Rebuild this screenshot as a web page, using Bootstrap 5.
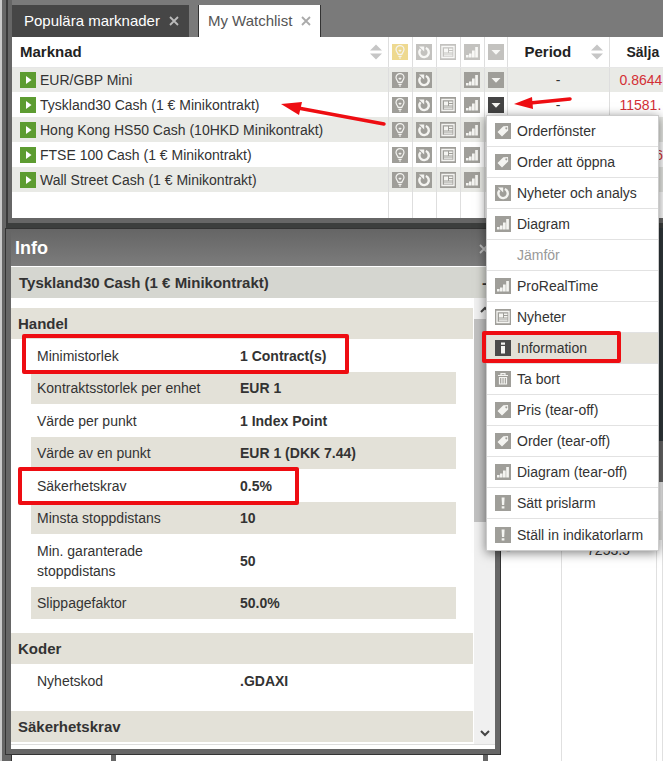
<!DOCTYPE html>
<html lang="sv">
<head>
<meta charset="utf-8">
<meta name="viewport" content="width=device-width, initial-scale=1">
<title>My Watchlist</title>
<link href="https://cdn.jsdelivr.net/npm/bootstrap@5.3.0/dist/css/bootstrap.min.css" rel="stylesheet">
<style>
body{font-family:"Liberation Sans",Arial,sans-serif;font-size:14px;line-height:20px;color:#333;background:#fff}
button{font:inherit;color:inherit}
.desk{min-height:100vh;overflow:hidden;background:#fff}
.ico{width:16px;height:16px;flex:none;display:block;background:#9f9e99;color:#f4f4f1}
.pale{opacity:.62}
.gold{background:#eed990}
.dark{background:#444}
.bare{border:0;background:none;padding:0;display:block}
/* windows at the back */
.left-strip{left:0;top:0;bottom:0;width:12px;background:#666;border-left:2px solid #c9c9c9;border-right:1px solid #333}
.back-win{left:12px;right:0;top:222px;bottom:0;background:#fff}
.chart-area{height:219px;background:#30373b}
.chart-foot{height:41px;background:#666}
.back-list{left:99px;top:531px;bottom:0;width:377px;background:#fff;border:solid #666;border-width:0 5px}
.back-grid{margin-left:494px;width:calc(100% - 494px);table-layout:fixed}
.back-grid td{padding:0;height:29px;border-right:1px solid #e0e0e0;text-align:center}
.back-grid tr:first-child td{background:#f0f0f0}
.back-grid tr:nth-child(2) td{background:#e4e4e2}
.back-grid td:first-child{text-align:left}
.back-grid .rest td{height:221px}
/* watchlist */
.watch{left:6px;right:0;top:0;background:#666;border-left:2px solid #3a3a3a;border-bottom:5px solid #3c3e3d;padding:0 0 5px 4px}
.tabs{height:37px;background:#7a7a7a;padding-top:5px;gap:9px}
.tab-item{height:32px;font-size:15px;padding:0 10px 0 12px;background:#464646;color:#fff;gap:9px}
.tab-item.current{background:#fff;color:#555;border:solid #333;border-width:0 1px;padding:0 9px}
.watch-body{background:#fff;height:181px}
.market{table-layout:fixed;width:100%;height:100%}
.market th,.market td{padding:0;border-right:1px solid #dedede;white-space:nowrap;overflow:hidden;height:25px}
.market th:last-child,.market td:last-child{border-right:0}
.market th{height:30px;font-size:15px;color:#222;border-bottom:1px solid #e6e6e6}
.market th.sell{font-size:14px;padding-left:17px}
.market td.price{color:#d32f35;padding-left:10px}
.market tr.odd td{background:#e9eae6}
.market .tail td{height:26px}
.market td>.ico,.market th>.ico,.market td>button{margin:auto}
.name-head{padding:0 6px 0 8px}
.period-head{padding:0 6px 0 17px}
.go{background:#5d9c31;color:#fff}
/* info */
.info{left:5px;top:228px;width:496px;background:#666;border:1px solid #333;padding:0 5px 5px}
.info-head{height:37px;background:linear-gradient(#656565,#7c7c7c);padding:2px 6px 0 4px;color:#fff}
.info-head h2{font-size:18px}
.info-title{height:32px;background:#d5d6d0;border-top:1px solid #fff;font-size:15px;padding:0 8px}
.info-body{background:#fff;padding-bottom:4px}
.info-scroll{border-bottom:1px solid #ddd;height:447px}
.sect{height:31px;font-size:15px;background:#e3e1d8;padding:0 7px;margin:0}
.sect:first-child{margin-top:10px}
.facts{margin:0 17px 14px 20px;width:calc(100% - 37px)}
.facts th,.facts td{padding:0 6px;height:33px}
.facts th{font-weight:400;width:203px}
.facts td{font-weight:700}
.facts tr:nth-child(even)>*{background:#e3e1d8;height:32px}
.facts .tall>*{height:53px}
.scrollrail{width:21px;background:#f0f0f0;margin-left:1px}
.scrollrail .thumb{height:203px;background:#c1c1c1}
.scrollrail button{height:21px;width:100%;color:#444}
/* menu */
.ctx{left:486px;top:115px;width:173px;background:#fff;border:1px solid #ccc;box-shadow:0 2px 10px rgba(0,0,0,.5)}
.ctx button{height:31px;padding:0 8px;gap:6px;border:0;border-bottom:1px solid #e2e2e2;background:#fff;width:100%;text-align:left;white-space:nowrap}
.ctx button:last-child{border-bottom:0}
.ctx button.hot{background:#e3e1d8}
.ctx button.hot .ico{background:#4a4a4a}
.ctx button:disabled{color:#999;padding-left:30px}
/* red annotations */
.ring{border:4px solid #ee0d12;border-radius:2px;pointer-events:none}
.ring-a{left:22px;top:334px;width:327px;height:40px}
.ring-b{left:18px;top:467px;width:281px;height:38px}
.ring-c{left:482px;top:331px;width:139px;height:32px}
.arrow-a{left:280px;top:96px}
.arrow-b{left:512px;top:94px}
</style>
<script src="https://cdn.jsdelivr.net/npm/bootstrap@5.3.0/dist/js/bootstrap.bundle.min.js"></script>
</head>
<body>
<svg class="d-none" aria-hidden="true">
<symbol id="bulb" viewBox="0 0 16 16"><path d="M6.2 10.4C6.2 8.800 4 8 4 5.600a4 4 0 0 1 8 0c0 2.400-2.200 3.200-2.200 4.800zM6.400 12.300h3.200M7 14h2M6.800 6l1.200 1.200L9.200 6" fill="none" stroke="currentColor" stroke-width="1.200"/></symbol>
<symbol id="cycle" viewBox="0 0 16 16"><path d="M9.800 4A4.700 4.700 0 1 1 4.600 5.200" fill="none" stroke="currentColor" stroke-width="2.400"/><path d="M3 2.600h5.200v5z" fill="currentColor"/></symbol>
<symbol id="news" viewBox="0 0 16 16"><path d="M2 2.500h12v11H2z" fill="none" stroke="currentColor" stroke-width="1.400"/><path d="M4 4.500h4v4H4zM9 4.500h3.500V6H9zM9 7h3.500v1.500H9zM4 9.500h8.500v1H4zM4 11.300h8.500v1H4z" fill="currentColor"/></symbol>
<symbol id="bars" viewBox="0 0 16 16"><path d="M2 11h2.600v2.500H2zM5 9.500h2.600v4H5zM8 6.500h2.700v7H8zM11.200 3h2.700v10.500h-2.700z" fill="currentColor"/></symbol>
<symbol id="down" viewBox="0 0 16 16"><path d="M3.500 6h9L8 10.800z" fill="currentColor"/></symbol>
<symbol id="play" viewBox="0 0 16 16"><path d="M6 4l5.500 4L6 12z" fill="currentColor"/></symbol>
<symbol id="tag" viewBox="0 0 16 16"><path fill-rule="evenodd" d="M8.300 3.200L13 3l.2 4.500-6.200 6L2.500 9zM11.300 4.200a1 1 0 1 0 .01 0z" fill="currentColor"/></symbol>
<symbol id="info" viewBox="0 0 16 16"><path d="M6 2.500h4v2.300H6zM6 6h4v7.500H6z" fill="currentColor"/></symbol>
<symbol id="bin" viewBox="0 0 16 16"><path d="M3 4.500h10M6 4V2.700h4V4M4.500 6.500h7v6.500h-7zM6.900 6.500V13M9.200 6.500V13" fill="none" stroke="currentColor" stroke-width="1.200"/></symbol>
<symbol id="alarm" viewBox="0 0 16 16"><path d="M6.600 2.500h3L9.200 10H7zM6.700 11.200h2.700v2.300H6.700z" fill="currentColor"/></symbol>
<symbol id="sort" viewBox="0 0 12 16"><path d="M0 6.500h12L6 .5zM0 9.500h12l-6 6z" fill="#c6c6c6"/></symbol>
<symbol id="cross" viewBox="0 0 10 10"><path d="M1 1l8 8M9 1L1 9" fill="none" stroke="currentColor" stroke-width="1.800"/></symbol>
</svg>

<main class="desk position-relative">
  <div class="left-strip position-absolute"></div>
  <section class="back-win position-absolute">
    <div class="chart-area"></div><div class="chart-foot"></div>
    <table class="back-grid">
      <colgroup><col style="width:55px"><col style="width:95px"><col></colgroup>
      <tr><td></td><td></td><td></td></tr>
      <tr><td></td><td></td><td></td></tr>
      <tr class="rest align-top"><td>-</td><td>7253.5</td><td></td></tr>
    </table>
    <div class="back-list position-absolute"></div>
  </section>

  <section class="watch position-absolute">
    <div class="tabs d-flex">
      <div class="tab-item d-flex align-items-center"><span>Populära marknader</span><button class="bare" aria-label="Stäng Populära marknader"><svg class="d-block" width="10" height="10" color="#bbb"><use href="#cross"/></svg></button></div>
      <div class="tab-item current d-flex align-items-center"><span>My Watchlist</span><button class="bare" aria-label="Stäng My Watchlist"><svg class="d-block" width="10" height="10" color="#aaa"><use href="#cross"/></svg></button></div>
    </div>
    <div class="watch-body">
      <table class="market">
        <colgroup><col style="width:376px"><col style="width:24px"><col style="width:24px"><col style="width:24px"><col style="width:24px"><col style="width:23px"><col style="width:102px"><col></colgroup>
        <thead><tr>
          <th><div class="name-head d-flex align-items-center justify-content-between"><span>Marknad</span><svg width="12" height="16"><use href="#sort"/></svg></div></th>
          <th><svg class="ico gold"><use href="#bulb"/></svg></th>
          <th><svg class="ico pale"><use href="#cycle"/></svg></th>
          <th><svg class="ico pale"><use href="#news"/></svg></th>
          <th><svg class="ico pale"><use href="#bars"/></svg></th>
          <th><svg class="ico pale"><use href="#down"/></svg></th>
          <th><div class="period-head d-flex align-items-center justify-content-between"><span>Period</span><svg width="12" height="16"><use href="#sort"/></svg></div></th>
          <th class="sell">Sälja</th>
        </tr></thead>
        <tbody>
        <tr class="odd"><td><div class="d-flex align-items-center ps-2"><svg class="ico go"><use href="#play"/></svg><span class="ps-1">EUR/GBP Mini</span></div></td><td><svg class="ico"><use href="#bulb"/></svg></td><td><svg class="ico"><use href="#cycle"/></svg></td><td></td><td><svg class="ico"><use href="#bars"/></svg></td><td><button class="bare" aria-label="Meny"><svg class="ico"><use href="#down"/></svg></button></td><td class="text-center">-</td><td class="price">0.8644</td></tr>
        <tr><td><div class="d-flex align-items-center ps-2"><svg class="ico go"><use href="#play"/></svg><span class="ps-1">Tyskland30 Cash (1 € Minikontrakt)</span></div></td><td><svg class="ico"><use href="#bulb"/></svg></td><td><svg class="ico"><use href="#cycle"/></svg></td><td><svg class="ico"><use href="#news"/></svg></td><td><svg class="ico"><use href="#bars"/></svg></td><td><button class="bare" aria-label="Meny" aria-expanded="true"><svg class="ico dark"><use href="#down"/></svg></button></td><td class="text-center">-</td><td class="price">11581.</td></tr>
        <tr class="odd"><td><div class="d-flex align-items-center ps-2"><svg class="ico go"><use href="#play"/></svg><span class="ps-1">Hong Kong HS50 Cash (10HKD Minikontrakt)</span></div></td><td><svg class="ico"><use href="#bulb"/></svg></td><td><svg class="ico"><use href="#cycle"/></svg></td><td><svg class="ico"><use href="#news"/></svg></td><td><svg class="ico"><use href="#bars"/></svg></td><td></td><td></td><td></td></tr>
        <tr><td><div class="d-flex align-items-center ps-2"><svg class="ico go"><use href="#play"/></svg><span class="ps-1">FTSE 100 Cash (1 € Minikontrakt)</span></div></td><td><svg class="ico"><use href="#bulb"/></svg></td><td><svg class="ico"><use href="#cycle"/></svg></td><td><svg class="ico"><use href="#news"/></svg></td><td><svg class="ico"><use href="#bars"/></svg></td><td></td><td></td><td class="price text-end">6</td></tr>
        <tr class="odd"><td><div class="d-flex align-items-center ps-2"><svg class="ico go"><use href="#play"/></svg><span class="ps-1">Wall Street Cash (1 € Minikontrakt)</span></div></td><td><svg class="ico"><use href="#bulb"/></svg></td><td><svg class="ico"><use href="#cycle"/></svg></td><td><svg class="ico"><use href="#news"/></svg></td><td><svg class="ico"><use href="#bars"/></svg></td><td></td><td></td><td></td></tr>
        <tr class="tail"><td></td><td></td><td></td><td></td><td></td><td></td><td></td><td></td></tr>
        </tbody>
      </table>
    </div>
  </section>

  <section class="info position-absolute">
    <header class="info-head d-flex align-items-center justify-content-between"><h2 class="fw-bold m-0">Info</h2><button class="bare" aria-label="Stäng"><svg class="d-block" width="10" height="10" color="#bbb"><use href="#cross"/></svg></button></header>
    <div class="info-title fw-bold d-flex align-items-center justify-content-between"><span>Tyskland30 Cash (1 € Minikontrakt)</span><button class="bare" aria-label="Fäll ihop">-</button></div>
    <div class="info-body">
      <div class="info-scroll d-flex">
        <div class="flex-grow-1">
          <h3 class="sect fw-bold d-flex align-items-center">Handel</h3>
          <table class="facts">
            <tr><th>Minimistorlek</th><td>1 Contract(s)</td></tr>
            <tr><th>Kontraktsstorlek per enhet</th><td>EUR 1</td></tr>
            <tr><th>Värde per punkt</th><td>1 Index Point</td></tr>
            <tr><th>Värde av en punkt</th><td>EUR 1 (DKK 7.44)</td></tr>
            <tr><th>Säkerhetskrav</th><td>0.5%</td></tr>
            <tr><th>Minsta stoppdistans</th><td>10</td></tr>
            <tr class="tall"><th>Min. garanterade<br>stoppdistans</th><td>50</td></tr>
            <tr><th>Slippagefaktor</th><td>50.0%</td></tr>
          </table>
          <h3 class="sect fw-bold d-flex align-items-center">Koder</h3>
          <table class="facts"><tr><th>Nyhetskod</th><td>.GDAXI</td></tr></table>
          <h3 class="sect fw-bold d-flex align-items-center">Säkerhetskrav</h3>
        </div>
        <div class="scrollrail d-flex flex-column">
          <button class="bare" aria-label="Upp"><svg class="d-block mx-auto" width="10" height="8"><path d="M1 7l4-4 4 4" fill="none" stroke="currentColor" stroke-width="2"/></svg></button>
          <div class="thumb"></div>
          <button class="bare mt-auto" aria-label="Ner"><svg class="d-block mx-auto" width="10" height="8"><path d="M1 1l4 4 4-4" fill="none" stroke="currentColor" stroke-width="2"/></svg></button>
        </div>
      </div>
    </div>
  </section>

  <div class="ctx position-absolute" role="menu">
    <button class="d-flex align-items-center" role="menuitem"><svg class="ico"><use href="#tag"/></svg>Orderfönster</button>
    <button class="d-flex align-items-center" role="menuitem"><svg class="ico"><use href="#tag"/></svg>Order att öppna</button>
    <button class="d-flex align-items-center" role="menuitem"><svg class="ico"><use href="#cycle"/></svg>Nyheter och analys</button>
    <button class="d-flex align-items-center" role="menuitem"><svg class="ico"><use href="#bars"/></svg>Diagram</button>
    <button class="d-flex align-items-center" role="menuitem" disabled>Jämför</button>
    <button class="d-flex align-items-center" role="menuitem"><svg class="ico"><use href="#bars"/></svg>ProRealTime</button>
    <button class="d-flex align-items-center" role="menuitem"><svg class="ico"><use href="#news"/></svg>Nyheter</button>
    <button class="hot d-flex align-items-center" role="menuitem"><svg class="ico"><use href="#info"/></svg>Information</button>
    <button class="d-flex align-items-center" role="menuitem"><svg class="ico"><use href="#bin"/></svg>Ta bort</button>
    <button class="d-flex align-items-center" role="menuitem"><svg class="ico"><use href="#tag"/></svg>Pris (tear-off)</button>
    <button class="d-flex align-items-center" role="menuitem"><svg class="ico"><use href="#tag"/></svg>Order (tear-off)</button>
    <button class="d-flex align-items-center" role="menuitem"><svg class="ico"><use href="#bars"/></svg>Diagram (tear-off)</button>
    <button class="d-flex align-items-center" role="menuitem"><svg class="ico"><use href="#alarm"/></svg>Sätt prislarm</button>
    <button class="d-flex align-items-center" role="menuitem"><svg class="ico"><use href="#alarm"/></svg>Ställ in indikatorlarm</button>
  </div>

  <div class="ring ring-a position-absolute"></div>
  <div class="ring ring-b position-absolute"></div>
  <div class="ring ring-c position-absolute"></div>
  <svg class="arrow-a position-absolute" width="108" height="32" aria-hidden="true"><path d="M18 12L104 28" stroke="#ee0d12" stroke-width="3.500" stroke-linecap="round"/><path d="M1 8l21-2-3 13z" fill="#ee0d12"/></svg>
  <svg class="arrow-b position-absolute" width="62" height="18" aria-hidden="true"><path d="M18 9L58 5" stroke="#ee0d12" stroke-width="3.500" stroke-linecap="round"/><path d="M2 10l18-7 1 12z" fill="#ee0d12"/></svg>
</main>
</body>
</html>
